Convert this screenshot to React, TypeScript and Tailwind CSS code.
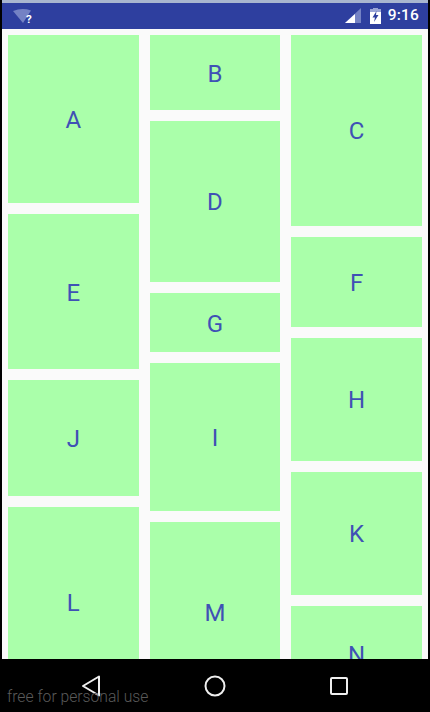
import React from 'react';

type Tile = { label: string; height: number };

const columns: Tile[][] = [
  [
    { label: 'A', height: 168.3 },
    { label: 'E', height: 154.7 },
    { label: 'J', height: 116 },
    { label: 'L', height: 191 },
  ],
  [
    { label: 'B', height: 75 },
    { label: 'D', height: 160.7 },
    { label: 'G', height: 59.7 },
    { label: 'I', height: 147.6 },
    { label: 'M', height: 180 },
  ],
  [
    { label: 'C', height: 190.7 },
    { label: 'F', height: 90 },
    { label: 'H', height: 123.3 },
    { label: 'K', height: 123 },
    { label: 'N', height: 97 },
  ],
];

const StatusBar: React.FC = () => (
  <div className="h-[29px] shrink-0 flex flex-col">
    <div className="h-[3px] bg-[#a9b6cf]" />
    <div className="flex-1 bg-[#2e3f9f] flex items-center pl-[11px] pr-[9px] text-white">
      <svg width="20" height="18" viewBox="0 0 20 18">
        <path d="M0 4 Q9 0.500 18 3.500 L10 16 Z" fill="#7482c4" />
        <text x="13" y="16" fontSize="11.5" fontWeight="700" fill="#fff" fontFamily="Roboto, sans-serif">?</text>
      </svg>
      <div className="ml-auto flex items-center">
        <svg width="16" height="16" viewBox="0 0 16 16">
          <path d="M0 15 L16 0 V15 Z" fill="#7482c4" />
          <path d="M0 15 L10 6 V15 Z" fill="#fff" />
        </svg>
        <svg className="ml-[9px]" width="11" height="16" viewBox="0 0 11 16">
          <path d="M3 0 H8 V1.500 H11 V16 H0 V1.500 H3 Z" fill="#fff" />
          <path d="M3 0 H8 V1.500 H11 V4 H0 V1.500 H3 Z" fill="#9aa5d6" />
          <path d="M6.500 3 L2.500 9.500 H5 L4 14 L8.500 7 H6 Z" fill="#2e3f9f" />
        </svg>
        <span className="ml-[7px] text-[15.500px] leading-none font-medium font-['Roboto',sans-serif] tracking-[0.2px]">9:16</span>
      </div>
    </div>
  </div>
);

const NavBar: React.FC = () => (
  <div className="relative h-[53px] shrink-0 bg-black flex items-center">
    <div className="w-full flex items-center justify-between pl-[81px] pr-[81px]">
      <svg width="20" height="22" viewBox="0 0 20 22" fill="none" stroke="#efefef" strokeWidth="2" strokeLinejoin="round">
        <path d="M18 1.500 V20.500 L2 11 Z" />
      </svg>
      <svg width="22" height="22" viewBox="0 0 22 22" fill="none" stroke="#efefef" strokeWidth="2">
        <circle cx="11" cy="11" r="9.500" />
      </svg>
      <svg width="20" height="20" viewBox="0 0 20 20" fill="none" stroke="#efefef" strokeWidth="2" strokeLinejoin="round">
        <rect x="2" y="2" width="16" height="16" rx="1" />
      </svg>
    </div>
    <span className="absolute left-[7px] top-[28px] text-[15.700px] leading-[20px] font-light text-[#5a5a5a] font-['Roboto',sans-serif] whitespace-nowrap">
      free for personal use
    </span>
  </div>
);

export default function App() {
  return (
    <div className="h-[712px] w-[430px] overflow-hidden flex flex-col bg-[#fafafa]">
      <div className="flex flex-1 flex-col min-h-0 border-x-2 border-black">
        <StatusBar />
        <div className="flex-1 min-h-0 overflow-hidden flex gap-[11px] pl-[6px] pt-[6px]">
          {columns.map((column, i) => (
            <div key={i} className="w-[130.670px] shrink-0 flex flex-col gap-[11px]">
              {column.map((tile) => (
                <div
                  key={tile.label}
                  style={{ height: tile.height }}
                  className="shrink-0 bg-[#aaffaa] flex items-center justify-center pt-[2px] text-[24px] text-[#3f51b5] font-['Roboto',sans-serif]"
                >
                  {tile.label}
                </div>
              ))}
            </div>
          ))}
        </div>
      </div>
      <NavBar />
    </div>
  );
}
